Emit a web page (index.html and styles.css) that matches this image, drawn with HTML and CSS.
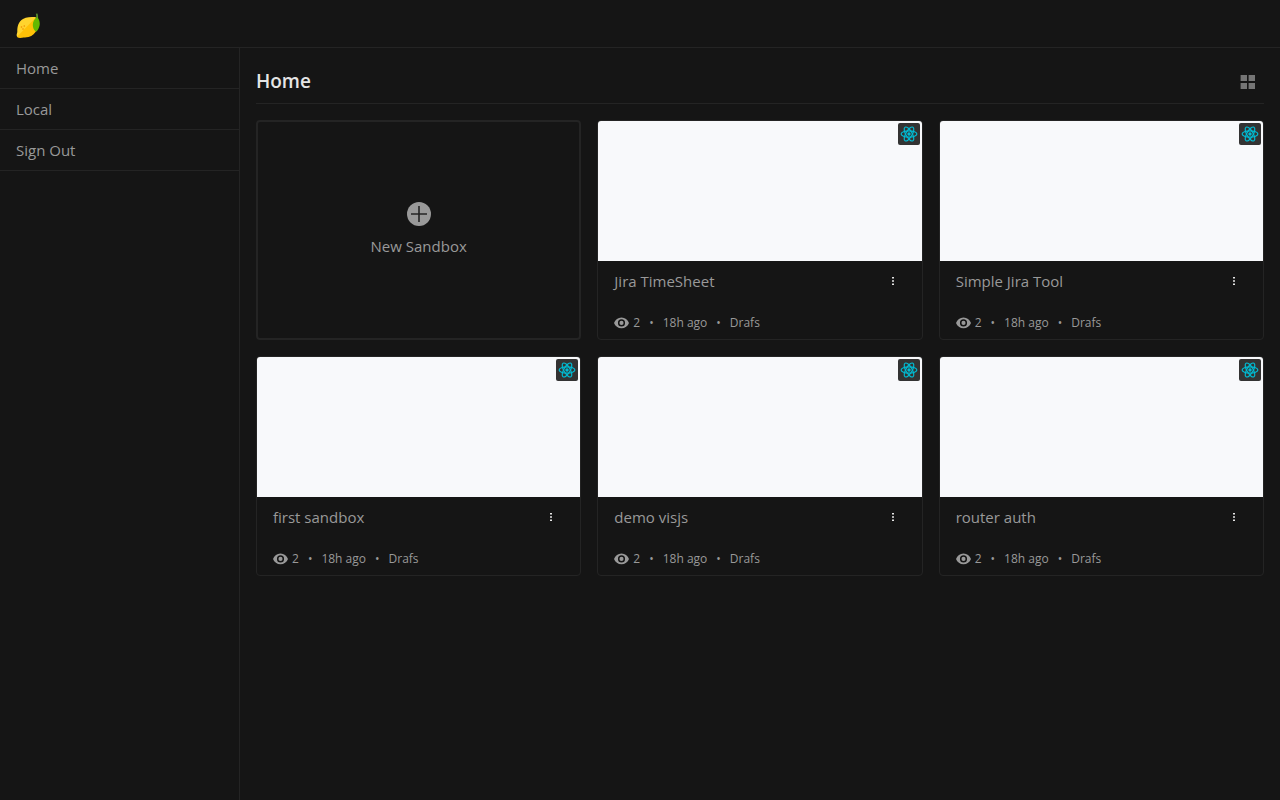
FILE: index.html
```html
<!DOCTYPE html>
<html lang="en">
<head>
<meta charset="utf-8">
<meta name="viewport" content="width=device-width, initial-scale=1">
<title>Home</title>
<link rel="stylesheet" href="styles.css">
</head>
<body>
<svg class="symbols" aria-hidden="true">
  <symbol id="react" viewBox="0 0 32 32">
    <circle cx="16" cy="16" r="3" fill="#00bcd4"/>
    <g fill="none" stroke="#00bcd4" stroke-width="2.1">
      <ellipse cx="16" cy="16" rx="14" ry="5.6"/>
      <ellipse cx="16" cy="16" rx="14" ry="5.6" transform="rotate(60 16 16)"/>
      <ellipse cx="16" cy="16" rx="14" ry="5.6" transform="rotate(120 16 16)"/>
    </g>
  </symbol>
  <symbol id="eye" viewBox="0 0 24 24">
    <path fill="currentColor" d="M12 2.500C6.500 2.500 2 6 0 11c2 5 6.500 8.500 12 8.500S22 16 24 11C22 6 17.500 2.500 12 2.500zm0 14.200a5.700 5.700 0 1 1 0-11.400 5.700 5.700 0 0 1 0 11.400zm0-9a3.300 3.300 0 1 0 0 6.600 3.300 3.300 0 0 0 0-6.600z"/>
  </symbol>
  <symbol id="dots" viewBox="0 0 10 10">
    <path fill="currentColor" d="M4 1h2v1.500H4zM4 4.200h2v1.500H4zM4 7.400h2v1.500H4z"/>
  </symbol>
</svg>

<header class="topbar">
  <a class="logo" href="#" aria-label="Lemon">
    <svg viewBox="0 0 24 26" width="24" height="26">
      <path fill="#558b2f" d="M20.200 6c0-2 .2-3.500-.4-5.200L21.400.5c.8 1.500.8 3.500.6 5.500z"/>
      <path fill="#ffd42e" d="M1 23.500C.2 22 1 20.500 1.300 19 1.200 13 2.500 8.500 7 6c3.500-2 7.500-1.800 12.500-2l1.500 4-14 16c-2 .3-4.800 1-6-.5z"/>
      <path fill="#ffc107" d="M1 23.800 19.800 4.500C22 8 22.500 12 21 16c-1.600 4.200-4.600 7-8.500 8-2.800.7-4.500.4-6.500.8-2 .3-4.200.2-5-1z"/>
      <path fill="#64b800" d="M21.200 4c2.200 2.300 3 5.400 2.300 8.700-.5 2.500-1.800 4.700-3.400 6.100-2.100-1.500-3.300-3.800-3.300-6.700 0-3.300 1.500-6.400 4.400-8.100z"/>
      <g fill="#f08c00"><circle cx="5.500" cy="14" r=".8"/><circle cx="8.300" cy="13" r=".8"/><circle cx="7" cy="16" r=".8"/></g>
    </svg>
  </a>
</header>

<div class="layout">
  <nav class="sidebar" aria-label="Main">
    <a class="nav-link" href="#">Home</a>
    <a class="nav-link" href="#">Local</a>
    <a class="nav-link" href="#">Sign Out</a>
  </nav>

  <main class="content">
    <div class="heading">
      <h1 class="title">Home</h1>
      <button class="view-toggle" type="button" aria-label="Grid view">
        <svg viewBox="0 0 16 16" width="16" height="16"><path fill="currentColor" d="M.6 1H7v6H.6zM8.600 1H15v6H8.600zM.6 9H7v6H.6zM8.600 9H15v6H8.600z"/></svg>
      </button>
    </div>

    <div class="grid">
      <button class="new-card" type="button">
        <svg viewBox="0 0 24 24" width="24" height="24"><circle cx="12" cy="12" r="12" fill="currentColor"/><path fill="#242424" d="M11.200 4h1.600v7.200H20v1.600h-7.200V20h-1.600v-7.200H4v-1.600h7.200z"/></svg>
        <span>New Sandbox</span>
      </button>

      <article class="card">
        <div class="preview"><span class="badge"><svg width="18" height="18"><use href="#react"/></svg></span></div>
        <div class="card-head"><h2 class="card-title">Jira TimeSheet</h2><button class="menu" type="button" aria-label="Options"><svg width="10" height="10"><use href="#dots"/></svg></button></div>
        <div class="meta"><span class="views"><svg width="15" height="15"><use href="#eye"/></svg>2</span><span>•</span><span>18h ago</span><span>•</span><span>Drafs</span></div>
      </article>

      <article class="card">
        <div class="preview"><span class="badge"><svg width="18" height="18"><use href="#react"/></svg></span></div>
        <div class="card-head"><h2 class="card-title">Simple Jira Tool</h2><button class="menu" type="button" aria-label="Options"><svg width="10" height="10"><use href="#dots"/></svg></button></div>
        <div class="meta"><span class="views"><svg width="15" height="15"><use href="#eye"/></svg>2</span><span>•</span><span>18h ago</span><span>•</span><span>Drafs</span></div>
      </article>

      <article class="card">
        <div class="preview"><span class="badge"><svg width="18" height="18"><use href="#react"/></svg></span></div>
        <div class="card-head"><h2 class="card-title">first sandbox</h2><button class="menu" type="button" aria-label="Options"><svg width="10" height="10"><use href="#dots"/></svg></button></div>
        <div class="meta"><span class="views"><svg width="15" height="15"><use href="#eye"/></svg>2</span><span>•</span><span>18h ago</span><span>•</span><span>Drafs</span></div>
      </article>

      <article class="card">
        <div class="preview"><span class="badge"><svg width="18" height="18"><use href="#react"/></svg></span></div>
        <div class="card-head"><h2 class="card-title">demo visjs</h2><button class="menu" type="button" aria-label="Options"><svg width="10" height="10"><use href="#dots"/></svg></button></div>
        <div class="meta"><span class="views"><svg width="15" height="15"><use href="#eye"/></svg>2</span><span>•</span><span>18h ago</span><span>•</span><span>Drafs</span></div>
      </article>

      <article class="card">
        <div class="preview"><span class="badge"><svg width="18" height="18"><use href="#react"/></svg></span></div>
        <div class="card-head"><h2 class="card-title">router auth</h2><button class="menu" type="button" aria-label="Options"><svg width="10" height="10"><use href="#dots"/></svg></button></div>
        <div class="meta"><span class="views"><svg width="15" height="15"><use href="#eye"/></svg>2</span><span>•</span><span>18h ago</span><span>•</span><span>Drafs</span></div>
      </article>
    </div>
  </main>
</div>
</body>
</html>
```
FILE: styles.css
```css
* {
  box-sizing: border-box;
}

body {
  margin: 0;
  min-height: 100vh;
  display: flex;
  flex-direction: column;
  background: #151515;
  color: #999;
  font: 15px/24px "Segoe UI", "Open Sans", "Noto Sans", sans-serif;
}

svg {
  display: block;
}

button {
  padding: 0;
  border: 0;
  background: none;
  color: inherit;
  font: inherit;
  cursor: pointer;
}

.symbols {
  display: none;
}

.topbar {
  display: flex;
  align-items: center;
  padding: 13px 16px 8px;
  border-bottom: 1px solid #242424;
}

.layout {
  flex: 1;
  display: flex;
}

.sidebar {
  width: 240px;
  flex-shrink: 0;
  border-right: 1px solid #242424;
}

.nav-link {
  display: block;
  padding: 8px 16px;
  border-bottom: 1px solid #242424;
  color: inherit;
  text-decoration: none;
}

.content {
  flex: 1;
  min-width: 0;
  padding: 16px;
}

.heading {
  display: flex;
  align-items: center;
  justify-content: space-between;
  padding: 4px 8px 8px 0;
  margin-bottom: 16px;
  border-bottom: 1px solid #242424;
}

.title {
  margin: 0;
  color: #e5e5e5;
  font-size: 19px;
  line-height: 27px;
  font-weight: 600;
}

.view-toggle {
  color: #757575;
}

.grid {
  display: grid;
  grid-template-columns: repeat(3, minmax(0, 1fr));
  gap: 16px;
}

.new-card {
  display: flex;
  flex-direction: column;
  align-items: center;
  justify-content: center;
  gap: 8px;
  border: 2px solid #242424;
  border-radius: 4px;
}

.card {
  border: 1px solid #242424;
  border-radius: 4px;
  overflow: hidden;
}

.preview {
  position: relative;
  height: 140px;
  background: #f8f9fb;
}

.badge {
  position: absolute;
  top: 2px;
  right: 2px;
  padding: 2px;
  border-radius: 2px;
  background: #333;
}

.card-head {
  display: flex;
  align-items: center;
  justify-content: space-between;
  padding: 8px 24px 8px 16px;
}

.card-title {
  margin: 0;
  font-size: 15px;
  line-height: 24px;
  font-weight: 400;
}

.menu {
  color: #e5e5e5;
}

.meta {
  display: flex;
  gap: 9px;
  padding: 12px 16px 6px;
  font-size: 12px;
  line-height: 20px;
}

.views {
  display: flex;
  align-items: center;
  gap: 4px;
}
```
